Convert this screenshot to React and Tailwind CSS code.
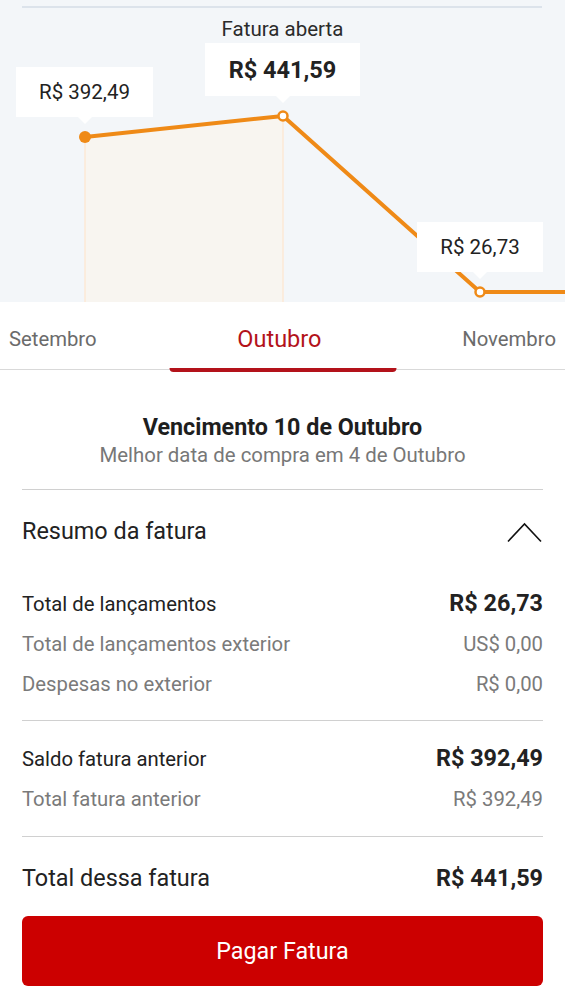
const font = { fontFamily: 'Roboto, "Noto Sans", sans-serif' };

function Bubble({ className, children }) {
  return (
    <div className={`absolute flex items-center justify-center bg-white ${className}`}>
      {children}
      <span className="absolute left-1/2 -bottom-[7px] -translate-x-1/2 w-0 h-0 border-x-[7px] border-x-transparent border-t-[7px] border-t-white" />
    </div>
  );
}

function Chart() {
  return (
    <div className="relative h-[302px] bg-[#f3f6f9] overflow-hidden">
      <svg className="absolute inset-0" width="565" height="302" viewBox="0 0 565 302">
        <line x1="22" y1="7" x2="542" y2="7" stroke="#d4dde6" strokeWidth="1.5" />
        <polygon points="85,137 283,116 283,302 85,302" fill="#f8f5f0" />
        <line x1="85" y1="137" x2="85" y2="302" stroke="#fde9d6" strokeWidth="1.5" />
        <line x1="283" y1="116" x2="283" y2="302" stroke="#fde9d6" strokeWidth="1.5" />
        <polyline points="85,137 283,116 480,292 565,292" fill="none" stroke="#ef8a17" strokeWidth="4" strokeLinejoin="round" />
        <circle cx="85" cy="137" r="6" fill="#ef8a17" />
        <circle cx="283" cy="116" r="4.5" fill="#fff" stroke="#ef8a17" strokeWidth="2.5" />
        <circle cx="480" cy="292" r="4.5" fill="#fff" stroke="#ef8a17" strokeWidth="2.5" />
      </svg>
      <div className="absolute left-0 right-0 top-[17px] text-center text-[20.5px] leading-6 text-[#2b2b2b]">Fatura aberta</div>
      <Bubble className="left-[16px] top-[67px] w-[137px] h-[50px] text-[20.5px] text-[#222]">R$ 392,49</Bubble>
      <Bubble className="left-[205px] top-[43px] w-[155px] h-[53px] pt-[2px] text-[23.5px] font-bold text-[#222]">R$ 441,59</Bubble>
      <Bubble className="left-[417px] top-[222px] w-[126px] h-[50px] text-[20.5px] text-[#222]">R$ 26,73</Bubble>
    </div>
  );
}

function Row({ label, value, strong, big }) {
  return (
    <div className="flex items-center justify-between h-10">
      <span className={`${big ? 'text-[23.4px]' : 'text-[20.3px]'} ${strong ? 'text-[#222]' : 'text-[#7a7a7a]'}`}>{label}</span>
      <span className={strong ? 'text-[23.4px] font-bold text-[#222]' : 'text-[20.3px] text-[#7a7a7a]'}>{value}</span>
    </div>
  );
}

export default function App() {
  return (
    <main className="w-[565px] h-[1000px] bg-white overflow-hidden" style={font}>
      <Chart />

      <div className="relative flex items-center justify-between h-[68px] pt-[8px] px-[9px] border-b border-[#d9d9d9]">
        <span className="text-[20.3px] text-[#6b6b6b]">Setembro</span>
        <span className="text-[23.5px] text-[#b3121a]">Outubro</span>
        <span className="text-[20.3px] text-[#6b6b6b]">Novembro</span>
        <span className="absolute left-1/2 -translate-x-1/2 -bottom-[3px] w-[227px] h-[4px] rounded-b bg-[#b3121a]" />
      </div>

      <div className="px-[22px]">
        <div className="pt-[43px] pb-[22px] text-center border-b border-[#d0d0d0]">
          <h1 className="text-[23.3px] leading-7 font-bold text-[#1e1e1e]">Vencimento 10 de Outubro</h1>
          <p className="mt-[2px] text-[20.4px] leading-6 text-[#777]">Melhor data de compra em 4 de Outubro</p>
        </div>

        <div className="pb-4 border-b border-[#d0d0d0]">
          <div className="flex items-center justify-between h-[84px]">
            <span className="text-[23.4px] text-[#222]">Resumo da fatura</span>
            <svg width="35" height="22" viewBox="0 0 35 22" fill="none" className="mr-[1px]">
              <polyline points="1,20.5 17.5,3 34,20.5" stroke="#111" strokeWidth="1.6" />
            </svg>
          </div>
          <div className="mt-[10px]">
            <Row label="Total de lançamentos" value="R$ 26,73" strong />
            <Row label="Total de lançamentos exterior" value="US$ 0,00" />
            <Row label="Despesas no exterior" value="R$ 0,00" />
          </div>
        </div>

        <div className="pt-[18px] pb-[17px] border-b border-[#d0d0d0]">
          <Row label="Saldo fatura anterior" value="R$ 392,49" strong />
          <Row label="Total fatura anterior" value="R$ 392,49" />
        </div>

        <div className="pt-[22px]">
          <Row label="Total dessa fatura" value="R$ 441,59" strong big />
        </div>

        <button className="mt-[17px] w-full h-[70px] rounded-md bg-[#cc0000] text-white text-[23.3px]">
          Pagar Fatura
        </button>
      </div>
    </main>
  );
}
